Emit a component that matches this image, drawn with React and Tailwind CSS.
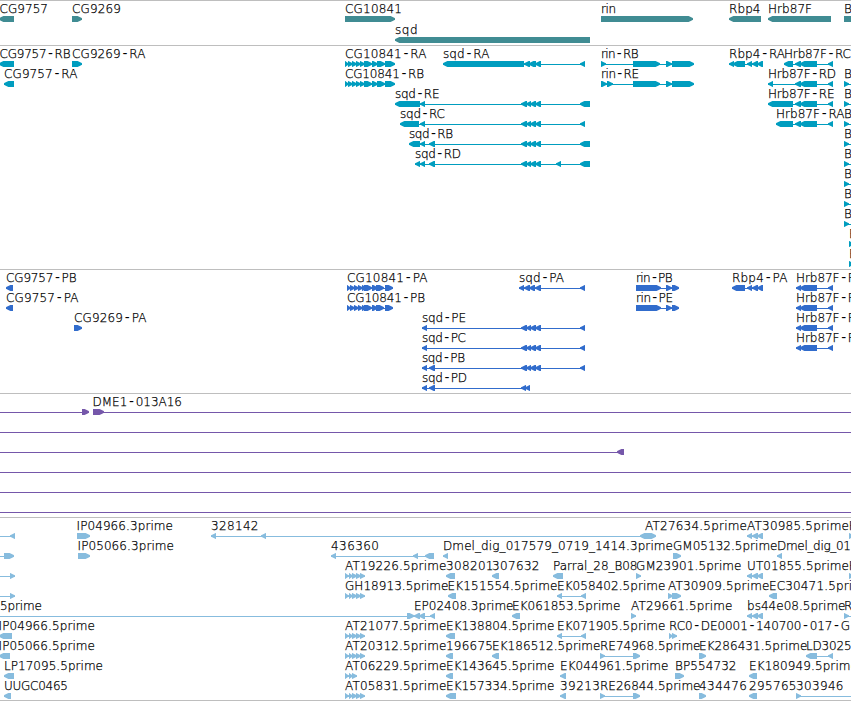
import React from "react";

// Each feature: [row, label, label start, label end, exons, [connector start, connector end]]
// Exons are written as direction + pixel range, e.g. "<443-524".
const SQD = "<521-527 <526-531 <530-536 <535-541";
const HRB = "<795-801 <800-817 <828-833";
const RBP = "<747-752 <752-758 <757-763";
const CG_R = ">345-349 >348-353 >352-357 >356-361 >360-365 >364-372 >372-378 >377-385 >385-395";
const CG_P = ">347-351 >350-355 >354-359 >358-363 >362-367 >364-372 >372-378 >376-384 >385-393";
const AT5 = ">345-349 >349-353 >352-357 >356-361 >360-365";
const TRI = "<747-752 <752-758 <757-763";

const genes = [
  [0, "CG9757", -0.5, 47.5, "<-1-14"],
  [0, "CG9269", 72, 120.5, ">72-82"],
  [0, "CG10841", 345, 401.5, ">345-395"],
  [1, "sqd", 395, 417, "<395-590"],
  [0, "rin", 601, 615.5, ">601-693"],
  [0, "Rbp4", 729, 760, "<729-761"],
  [0, "Hrb87F", 768, 811.5, "<768-831"],
  [0, "B", 844, 851.5, ">844-870"],
];

const transcripts = [
  [0, "CG9757-RB", -0.5, 70, "<-1-14"],
  [0, "CG9269-RA", 72, 145, ">72-82"],
  [0, "CG10841-RA", 345, 426, CG_R],
  [0, "sqd-RA", 443, 489, "<443-524 <524-530 <529-536 <535-541 <580-585"],
  [0, "rin-RB", 601, 638, ">601-606 >633-660 >666-672 >672-694"],
  [0, "Rbp4-RA", 729, 784.5, "<729-734 <733-745 " + RBP],
  [0, "Hrb87F-RC", 784, 850.5, "<784-793 " + HRB],
  [1, "CG9757-RA", 4, 77, "<4-14"],
  [1, "CG10841-RB", 345, 423.5, CG_R],
  [1, "rin-RE", 601, 638.5, ">601-607 >607-613 >633-660 >666-672 >672-694"],
  [1, "Hrb87F-RD", 768, 835.5, "<768-773 " + HRB],
  [2, "sqd-RE", 395, 439, "<395-420 <420-425 " + SQD + " <580-590"],
  [2, "Hrb87F-RE", 768, 834, "<768-793 " + HRB],
  [3, "sqd-RC", 400, 444.5, "<400-419 <420-425 " + SQD + " <580-585"],
  [3, "Hrb87F-RA", 776, 844, "<776-793 " + HRB],
  [4, "sqd-RB", 409, 452.5, "<409-420 <420-425 <429-435 " + SQD + " <580-590"],
  [5, "sqd-RD", 415, 460.5, "<415-420 <420-425 <429-435 " + SQD + " <556-561 <580-590"],
  ...[1, 2, 3, 4, 5, 6, 7, 8].map((r) => [r, "B", 844, 851.5, ">844-849", [844, 860]]),
  [9, "B", 849, 856.5, ">849-854", [849, 860]],
  [10, "B", 849, 856.5, ">849-854", [849, 860]],
];

const proteins = [
  [0, "CG9757-PB", 6, 76, "<6-13"],
  [1, "CG9757-PA", 6, 78, "<6-13"],
  [2, "CG9269-PA", 74, 146, ">74-82"],
  [0, "CG10841-PA", 347, 427, CG_P],
  [1, "CG10841-PB", 347, 424.5, CG_P],
  [0, "sqd-PA", 519, 563.5, "<519-524 <524-530 <529-535 <535-541 <580-585"],
  [2, "sqd-PE", 422, 465.5, "<422-427 " + SQD + " <580-585"],
  [3, "sqd-PC", 422, 465.5, "<422-427 " + SQD + " <580-585"],
  [4, "sqd-PB", 422, 464.5, "<422-427 <429-435 " + SQD + " <580-585"],
  [5, "sqd-PD", 422, 466.5, "<422-427 <429-435 <521-526 <525-530"],
  [0, "rin-PB", 636, 672, ">636-661 >666-672 >672-679"],
  [1, "rin-PE", 636, 672.5, ">636-661 >666-672 >672-679"],
  [0, "Rbp4-PA", 732, 787, "<732-745 " + RBP],
  ...[0, 1, 2, 3].map((r) => [r, "Hrb87F-PA", 796, 862, "<796-801 <800-817 <828-833"]),
];

const clones = [
  [0, "", 0, 0, ">82-89", [0, 89]],
  [0, "DME1-013A16", 92.5, 181.5, ">93-104", [93, 851]],
  [1, "", 0, 0, "", [0, 851]],
  [2, "", 0, 0, "<617-624", [0, 624]],
  [3, "", 0, 0, "", [0, 851]],
  [4, "", 0, 0, "", [0, 851]],
  [5, "", 0, 0, "", [0, 851]],
];

const ests = [
  [0, "", 0, 0, "<10-15", [0, 15]],
  [0, "IP04966.3prime", 76.5, 172.5, ">77-90"],
  [0, "328142", 211, 258, "<211-216 <261-266 <640-650", [211, 650]],
  [0, "AT27634.5prime", 645, 746.5, ">645-656"],
  [0, "AT30985.5prime", 747, 848.5, TRI],
  [0, "H", 848.8, 857.8, ">849-854"],
  [1, "", 0, 0, ">4-14", [0, 14]],
  [1, "IP05066.3prime", 77.5, 173.5, ">78-90"],
  [1, "436360", 331, 378.5, "<331-336 <413-418 <425-434"],
  [1, "Dmel_dig_017579_0719_1414.3prime", 443, 672.5, "<443-448"],
  [1, "GM05132.5prime", 673, 777, ">673-681"],
  [1, "Dmel_dig_01", 777, 850.5, "<777-782"],
  [2, "", 0, 0, ">10-15", [0, 15]],
  [2, "AT19226.5prime", 345, 446, AT5],
  [2, "308201", 446, 493, "<446-455"],
  [2, "307632", 492, 539, "<492-499"],
  [2, "Parral_28_B08", 553, 637, "<553-563"],
  [2, "GM23901.5prime", 636, 741, ">636-641"],
  [2, "UT01855.5prime", 747, 848.5, TRI],
  [2, "H", 848.8, 857.8, ">849-854"],
  [3, "", 0, 0, ">10-15", [0, 15]],
  [3, "GH18913.5prime", 345, 448, AT5],
  [3, "EK151554.5prime", 447.5, 557, "<448-456"],
  [3, "EK058402.5prime", 557, 665, "<557-562 <581-586"],
  [3, "AT30909.5prime", 668, 769, ">668-673 >672-681"],
  [3, "EC30471.5prime", 769, 871, "<769-777"],
  [4, "5prime", 0, 41.5, ">407-414", [0, 414]],
  [4, "EP02408.3prime", 414, 513, "<414-420 <419-425 <430-435"],
  [4, "EK061853.5prime", 512, 620, "<512-520"],
  [4, "AT29661.5prime", 631, 732, ">631-636"],
  [4, "bs44e08.5prime", 747, 845, TRI],
  [4, "R", 844, 852, ">844-849", [844, 860]],
  [5, "IP04966.5prime", -1.5, 94.5, "<-1-12"],
  [5, "AT21077.5prime", 345, 446, AT5],
  [5, "EK138804.5prime", 446, 554, "<446-455"],
  [5, "EK071905.5prime", 557, 665, "<557-562 <581-586"],
  [5, "RC0-DE0001-140700-017-G", 669, 849.5, ">669-673 >672-677"],
  [6, "IP05066.5prime", -1.5, 94.5, "<-1-10"],
  [6, "AT20312.5prime", 345, 446, AT5],
  [6, "196675", 446, 492.5, "<446-453"],
  [6, "EK186512.5prime", 492, 600, "<492-499"],
  [6, "RE74968.5prime", 600, 700, ">600-605 >633-640"],
  [6, "EK286431.5prime", 699, 807, ">699-706"],
  [6, "LD30258", 806, 858.5, "<806-817 <828-833"],
  [7, "LP17095.5prime", 4, 102.5, "<4-14"],
  [7, "AT06229.5prime", 345, 446, ">345-349 >349-353 >352-357"],
  [7, "EK143645.5prime", 446, 554, "<446-453"],
  [7, "EK044961.5prime", 560, 668, "<560-566"],
  [7, "BP554732", 675, 736, ">675-684"],
  [7, "EK180949.5prime", 749, 857.5, "<749-757"],
  [8, "UUGC0465", 4, 67.5, "<4-11"],
  [8, "AT05831.5prime", 345, 446, AT5],
  [8, "EK157334.5prime", 446, 554, "<446-456"],
  [8, "39213", 560, 599.5, "<560-566"],
  [8, "RE26844.5prime", 600, 700, ">600-605 >633-640"],
  [8, "434476", 699, 746.5, ">699-706"],
  [8, "295765", 749, 796, "<749-757"],
  [8, "303946", 796, 843, ">796-801", [796, 860]],
];

function parseExons(text) {
  return [...text.matchAll(/([<>])(-?\d+)-(\d+)/g)].map((m) => ({
    dir: m[1],
    a: Number(m[2]),
    b: Number(m[3]),
  }));
}

function Exon({ dir, a, b, y }) {
  const tip = Math.min(5, b - a);
  const [point, shoulder, back, s] = dir === "<" ? [a, a + tip, b, 1] : [b, b - tip, a, -1];
  const small = b - a <= 6;
  const inset = small ? 0.3 : 0.6;
  const bend = small ? 1.6 : 1.3;
  const points = [
    [back, y],
    [shoulder - s * inset, y],
    [point + s * 1.8, y + bend],
    [point, y + 2.3],
    [point, y + 3.7],
    [point + s * 1.8, y + 6 - bend],
    [shoulder - s * inset, y + 6],
    [back, y + 6],
  ];
  return <polygon points={points.map((p) => p.join(",")).join(" ")} />;
}

// Hyphens are set wider than the rest of the label.
function Label({ x, y, width, text }) {
  return (
    <text x={x} y={y} textLength={width} className="fill-black stroke-black [stroke-width:0.25px]">
      {text.split(/(-)/).map((part, i) =>
        part === "-" ? (
          <tspan key={i} className="font-['DejaVu_Sans_Mono',monospace] text-[14px] font-normal [stroke-width:0]">
            -
          </tspan>
        ) : (
          part
        )
      )}
    </text>
  );
}

function Feature({ data, pitch }) {
  const [row, label, start, end, exonText, connector] = data;
  const exons = parseExons(exonText);
  const y = 15 + row * pitch;
  const [from, to] = connector || [exons[0].a, exons[exons.length - 1].b];
  return (
    <g>
      <rect x={from} y={y + 3} width={to - from} height="1" />
      {exons.map((e, i) => (
        <Exon key={i} {...e} y={y} />
      ))}
      {label && <Label x={start} y={y - 3} width={end - start + 0.5} text={label} />}
    </g>
  );
}

function Track({ features, className, pitch = 20 }) {
  return (
    <section className={`w-full shrink-0 overflow-hidden border-t border-[#bebebe] ${className}`}>
      <svg className="block h-full w-full font-['DejaVu_Sans',sans-serif] text-[12px] font-extralight">
        {features.map((f, i) => (
          <Feature key={i} data={f} pitch={pitch} />
        ))}
      </svg>
    </section>
  );
}

export default function App() {
  return (
    <main className="flex h-[701px] w-[851px] flex-col overflow-hidden bg-white">
      <Track features={genes} pitch={21} className="h-[45px] fill-[#408c93]" />
      <Track features={transcripts} className="h-[224px] fill-[#009dbf]" />
      <Track features={proteins} className="h-[124px] fill-[#316ccc]" />
      <Track features={clones} className="h-[124px] fill-[#7557aa]" />
      <Track features={ests} className="h-[183px] fill-[#87bcde]" />
      <div className="h-px w-full bg-[#bebebe]" />
    </main>
  );
}
